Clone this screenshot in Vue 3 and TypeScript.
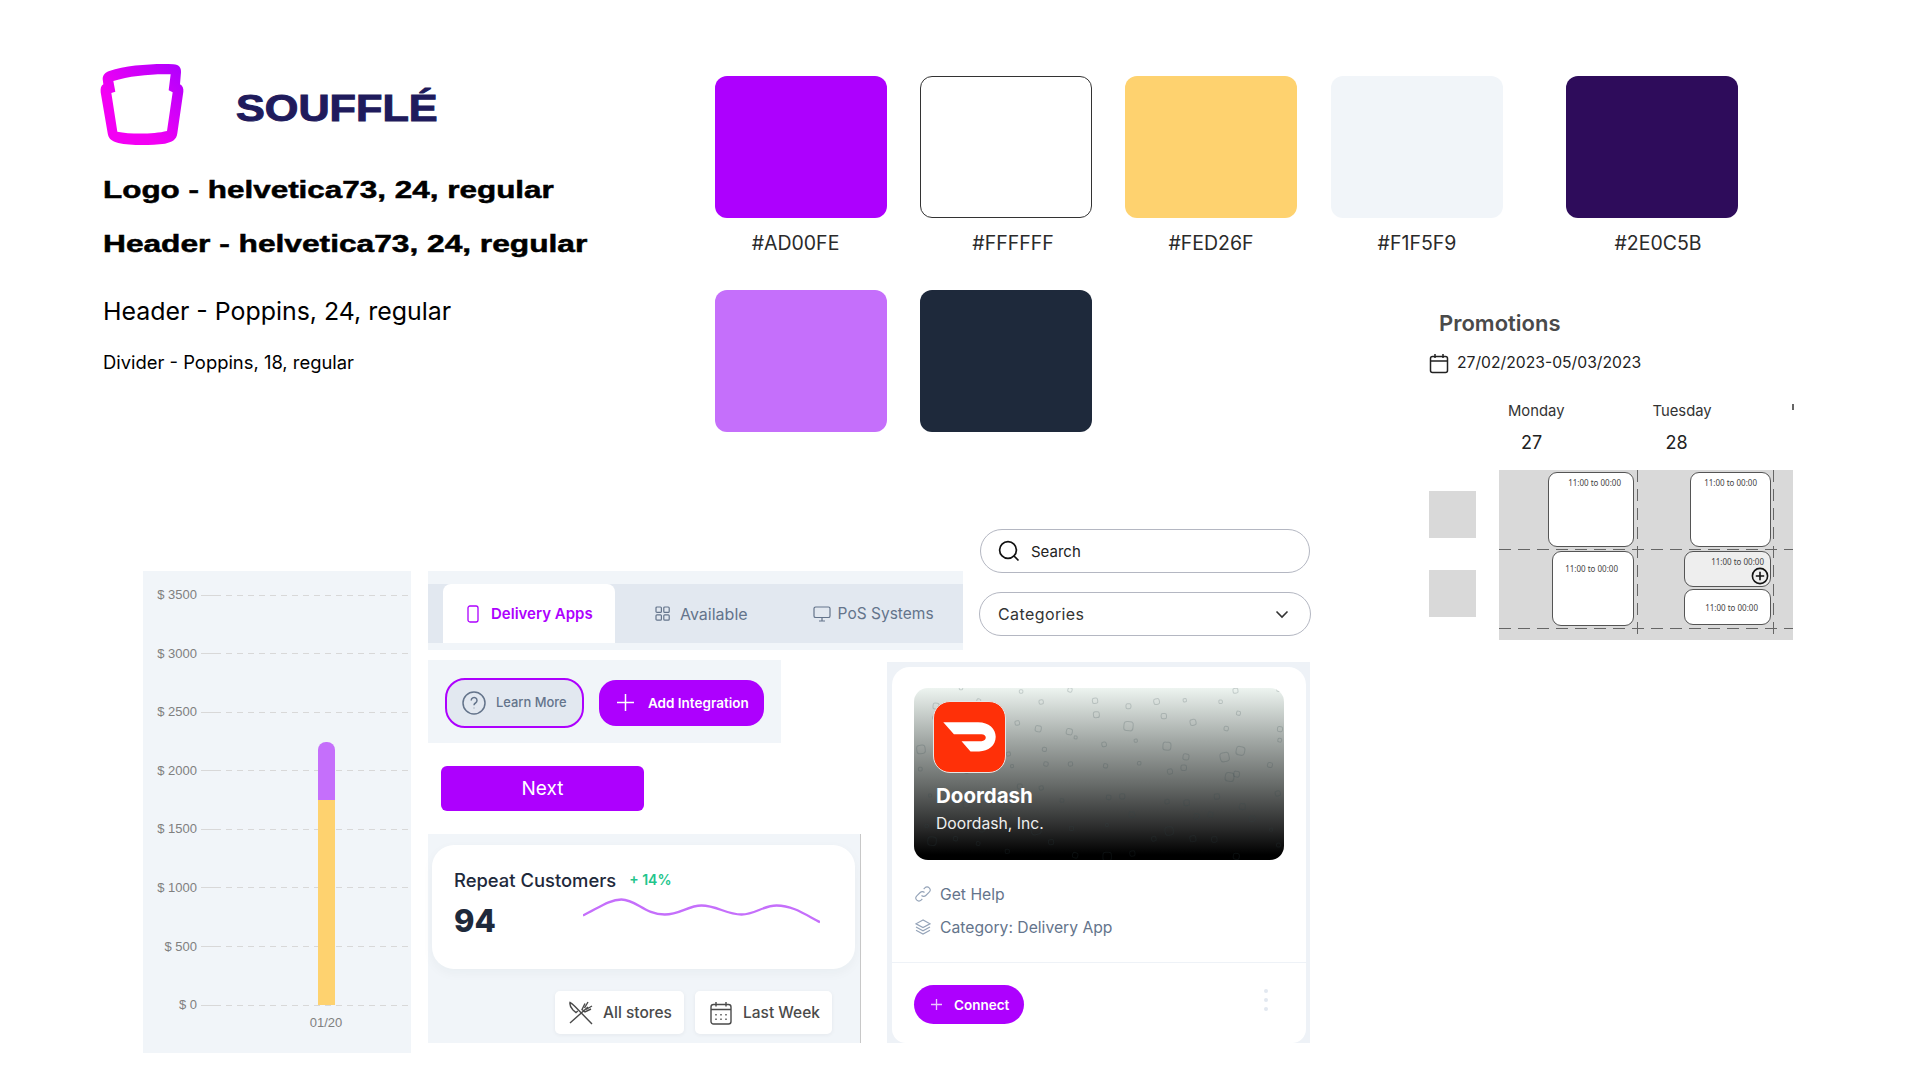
<template>
  <div class="board">
    <!-- brand + type specs -->
    <section class="brand">
      <svg class="logo" viewBox="0 0 300 290" width="100" height="96.7">
        <defs>
          <linearGradient id="logoGrad" x1="0" y1="1" x2="1" y2="0">
            <stop offset="0.35" stop-color="#f300f4" />
            <stop offset="1" stop-color="#ad00fe" />
          </linearGradient>
        </defs>
        <path
          fill="url(#logoGrad)"
          fill-rule="evenodd"
          d="M58 48C110 30 200 25 250 28C268 29 274 40 273 52L270 88C278 92 281 100 280 110L262 235C260 255 245 262 225 266C180 272 120 272 85 264C65 260 55 250 53 235L32 112C31 100 33 92 40 88L38 72C38 60 46 52 58 48ZM70 78C120 62 190 56 242 58L236 106L248 112L231 228C190 238 120 238 82 230L64 114L76 110Z"
        />
      </svg>
      <span class="wordmark">SOUFFLÉ</span>
    </section>

    <section class="specs">
      <div class="spec spec-a"><span class="wide">Logo - helvetica73, 24, regular</span></div>
      <div class="spec spec-b"><span class="wide">Header - helvetica73, 24, regular</span></div>
      <div class="spec spec-c">Header - Poppins, 24, regular</div>
      <div class="spec spec-d">Divider - Poppins, 18, regular</div>
    </section>

    <!-- palette -->
    <section class="palette">
      <div class="swatch-row">
        <div v-for="s in swatches" :key="s.hex" class="swatch-item" :class="s.cls">
          <div class="swatch" :style="{ background: s.hex }"></div>
          <div class="swatch-label">{{ s.hex }}</div>
        </div>
      </div>
      <div class="swatch-row second">
        <div class="swatch lilac"></div>
        <div class="swatch slate"></div>
      </div>
    </section>

    <!-- promotions -->
    <section class="promo">
      <h2 class="promo-title">Promotions</h2>
      <div class="promo-date">
        <svg width="20" height="21" viewBox="0 0 20 21" fill="none" stroke="#222" stroke-width="1.5">
          <rect x="1.5" y="3.5" width="17" height="16" rx="2" />
          <path d="M1.5 8h17M6 1v4M14 1v4" />
        </svg>
        <span>27/02/2023-05/03/2023</span>
      </div>
      <div class="days">
        <div class="day">
          <div class="day-name">Monday</div>
          <div class="day-num">27</div>
        </div>
        <div class="day">
          <div class="day-name">Tuesday</div>
          <div class="day-num">28</div>
        </div>
        <div class="day-clip"></div>
      </div>
      <div class="sched-wrap">
        <div class="row-heads">
          <div class="row-head"></div>
          <div class="row-head"></div>
        </div>
        <div class="sched">
          <svg class="sched-lines" width="294" height="170">
            <g stroke="#666" stroke-width="1" stroke-dasharray="12 7">
              <path d="M0 79.5H294M0 158.5H294" />
              <path d="M138.500 0V170M274.500 0V170" />
            </g>
          </svg>
          <div class="cell c1">
            <div class="slot s-a"><span>11:00 to 00:00</span></div>
          </div>
          <div class="cell c2">
            <div class="slot s-c"><span>11:00 to 00:00</span></div>
          </div>
          <div class="cell c3">
            <div class="slot s-b"><span>11:00 to 00:00</span></div>
          </div>
          <div class="cell c4">
            <div class="slot s-d">
              <span>11:00 to 00:00</span>
              <svg class="slot-add" width="18" height="18" viewBox="0 0 18 18" fill="none" stroke="#111" stroke-width="1.6">
                <circle cx="9" cy="9" r="7.600" />
                <path d="M9 4.800v8.400M4.800 9h8.400" />
              </svg>
            </div>
            <div class="slot s-e"><span>11:00 to 00:00</span></div>
          </div>
        </div>
      </div>
    </section>

    <!-- chart -->
    <section class="chart">
      <div v-for="t in ticks" :key="t" class="tick">
        <span class="tick-label">$ {{ t }}</span>
        <span class="tick-solid"></span>
        <span class="tick-dash"></span>
      </div>
      <div class="bar">
        <div class="bar-top"></div>
        <div class="bar-bottom"></div>
      </div>
      <div class="bar-label">01/20</div>
    </section>

    <!-- tabs -->
    <section class="tabs">
      <div class="tab-bar">
        <div class="tab active">
          <svg width="12" height="18" viewBox="0 0 12 18" fill="none" stroke="#ad00fe" stroke-width="1.300">
            <rect x="1" y="1" width="10" height="16" rx="2" />
            <path d="M6 14.200v.1" />
          </svg>
          Delivery Apps
        </div>
        <div class="tab avail">
          <svg width="15" height="15" viewBox="0 0 15 15" fill="none" stroke="#64748b" stroke-width="1.200">
            <rect x="1" y="1" width="5.400" height="5.400" rx="1" />
            <rect x="8.800" y="1" width="5.400" height="5.400" rx="1" />
            <rect x="1" y="8.800" width="5.400" height="5.400" rx="1" />
            <rect x="8.800" y="8.800" width="5.400" height="5.400" rx="1" />
          </svg>
          Available
        </div>
        <div class="tab pos">
          <svg width="18" height="16" viewBox="0 0 18 16" fill="none" stroke="#64748b" stroke-width="1.200">
            <rect x="1" y="1" width="16" height="10.500" rx="1.600" />
            <path d="M9 11.500v3.500M6 15h6" />
          </svg>
          PoS Systems
        </div>
      </div>
    </section>

    <section class="actions">
      <button class="learn">
        <svg width="24" height="24" viewBox="0 0 24 24" fill="none" stroke="#64748b" stroke-width="1.500">
          <circle cx="12" cy="12" r="11" />
          <path d="M9.200 9.400a2.900 2.900 0 1 1 4.300 2.600c-1 .6-1.500 1.100-1.500 2.200" />
          <path d="M12 16.800v.5" />
        </svg>
        Learn More
      </button>
      <button class="add">
        <svg width="17" height="17" viewBox="0 0 17 17" fill="none" stroke="#fff" stroke-width="1.500">
          <path d="M8.500 0v17M0 8.500h17" />
        </svg>
        Add Integration
      </button>
    </section>

    <button class="next">Next</button>

    <!-- repeat customers -->
    <section class="repeat">
      <div class="repeat-card">
        <div class="repeat-head">
          <span class="repeat-title">Repeat Customers</span>
          <span class="repeat-delta">+ 14%</span>
        </div>
        <div class="repeat-value">94</div>
        <svg class="spark" viewBox="490 235 710 80" width="237" height="27" fill="none">
          <path
            stroke="#c56ffb"
            stroke-width="7"
            d="M490 290C540 265 570 242 605 242C650 242 675 287 735 287C780 287 805 260 845 260C890 260 920 287 965 287C1005 287 1030 260 1070 260C1120 260 1160 290 1200 310"
          />
        </svg>
      </div>
      <div class="filters">
        <div class="filter stores">
          <svg width="24" height="24" viewBox="0 0 24 24" fill="none" stroke="#4a4a4a" stroke-width="1.400">
            <path d="M1 22L19 6M16 2.500l-3 6 3 2.500 6-3M19 1l-3.500 6M23 5l-6 3.500" />
            <path d="M23 23L6 5.500C4 3.500 2.200 2 1 1.500c-.4 2.500 1 5.500 3 7.500l3 2.500 1.800-1.500" />
          </svg>
          All stores
        </div>
        <div class="filter week">
          <svg width="22" height="24" viewBox="0 0 22 24" fill="none" stroke="#4a4a4a" stroke-width="1.400">
            <rect x="1" y="3.500" width="20" height="19.500" rx="2.500" />
            <path d="M1 8.500h20M6 1v4.500M16 1v4.500" />
            <path d="M6 13v1.400M11 13v1.400M16 13v1.400M6 17.500v1.400M11 17.500v1.400M16 17.500v1.400" />
          </svg>
          Last Week
        </div>
      </div>
    </section>

    <!-- search + select -->
    <div class="search">
      <svg width="22" height="22" viewBox="0 0 22 22" fill="none" stroke="#111" stroke-width="1.700">
        <circle cx="10" cy="10" r="8.400" />
        <path d="M16 16l4.500 4.500" />
      </svg>
      Search
    </div>
    <div class="select">
      Categories
      <svg width="14" height="9" viewBox="0 0 14 9" fill="none" stroke="#333" stroke-width="1.600">
        <path d="M1.500 1.500L7 7l5.500-5.500" />
      </svg>
    </div>

    <!-- integration card -->
    <section class="integration">
      <div class="int-card">
        <div class="int-hero">
          <svg class="int-pattern" width="370" height="172" fill="none" stroke="#33484a" stroke-opacity="0.2">
            <rect
              v-for="(p, i) in bubbles"
              :key="i"
              :x="p.x"
              :y="p.y"
              :width="p.s"
              :height="p.s"
              :rx="p.s / 3"
              :transform="`rotate(${p.r} ${p.x + p.s / 2} ${p.y + p.s / 2})`"
            />
          </svg>
          <div class="dd-icon">
            <svg viewBox="160 543 218 217" width="73" height="72">
              <path
                fill="#fff"
                d="M190 607L295 607C328 607 348 627 348 651C348 677 326 695 298 695L272 695L245 664L305 664C313 664 318 659 318 653C318 647 313 643 305 643L222 643Z"
              />
            </svg>
          </div>
          <div class="dd-name">Doordash</div>
          <div class="dd-company">Doordash, Inc.</div>
        </div>
        <div class="int-meta">
          <div class="meta-row">
            <svg width="16" height="16" viewBox="0 0 16 16" fill="none" stroke="#94a3b8" stroke-width="1.100">
              <path d="M6.500 9.500a3 3 0 0 0 4.300 0l3.400-3.400a3 3 0 0 0-4.300-4.300L8.700 3" />
              <path d="M9.500 6.500a3 3 0 0 0-4.300 0L1.800 9.900a3 3 0 0 0 4.300 4.300L7.300 13" />
            </svg>
            Get Help
          </div>
          <div class="meta-row">
            <svg width="16" height="16" viewBox="0 0 16 16" fill="none" stroke="#94a3b8" stroke-width="1.100">
              <path d="M8 1L1 4.800l7 3.800 7-3.800z" />
              <path d="M1 8l7 3.800L15 8" />
              <path d="M1 11.200L8 15l7-3.800" />
            </svg>
            Category: Delivery App
          </div>
        </div>
        <div class="int-foot">
          <button class="connect">
            <svg width="11" height="11" viewBox="0 0 11 11" fill="none" stroke="#ecc6ff" stroke-width="1.300">
              <path d="M5.500 0v11M0 5.500h11" />
            </svg>
            Connect
          </button>
          <div class="dots"><i></i><i></i><i></i></div>
        </div>
      </div>
    </section>
  </div>
</template>

<script setup lang="ts">
interface Swatch {
  hex: string;
  cls?: string;
}

const swatches: Swatch[] = [
  { hex: "#AD00FE", cls: "first" },
  { hex: "#FFFFFF", cls: "outlined" },
  { hex: "#FED26F" },
  { hex: "#F1F5F9", cls: "fourth" },
  { hex: "#2E0C5B", cls: "last" },
];

const ticks = [3500, 3000, 2500, 2000, 1500, 1000, 500, 0];

// little squircles on a jittered grid, behind the hero gradient
function makeBubbles() {
  const out: { x: number; y: number; s: number; r: number }[] = [];
  let seed = 37;
  const rnd = () => {
    seed = (seed * 16807) % 2147483647;
    return seed / 2147483647;
  };
  for (let row = 0; row < 7; row++) {
    for (let col = 0; col < 13; col++) {
      const big = rnd() > 0.8;
      out.push({
        x: col * 29 + rnd() * 22,
        y: row * 25 + rnd() * 20 - 4,
        s: big ? 8 + rnd() * 2 : 3 + rnd() * 3,
        r: rnd() * 30 - 15,
      });
    }
  }
  return out;
}

const bubbles = makeBubbles();
</script>

<style>
body {
  margin: 0;
  background: #fff;
}
</style>

<style scoped>
.board {
  position: relative;
  width: 1920px;
  height: 1080px;
  overflow: hidden;
  background: #fff;
  font-family: Inter, "Noto Sans", sans-serif;
  color: #111;
}

.board > section,
.board > .search,
.board > .select,
.board > .next {
  position: absolute;
}

button {
  border: 0;
  font-family: inherit;
  padding: 0;
}

/* brand */
.brand {
  left: 90px;
  top: 55px;
  width: 360px;
  height: 100px;
}
.logo {
  display: block;
}
.wordmark {
  position: absolute;
  left: 146px;
  top: 31px;
  font: 700 36px/46px "Liberation Sans", Arial, sans-serif;
  color: #1f1b5c;
  -webkit-text-stroke: 1px #1f1b5c;
  transform: scaleX(1.2);
  transform-origin: left center;
}

/* type specs */
.specs {
  left: 103px;
  top: 170px;
  width: 520px;
}
.spec {
  white-space: nowrap;
}
.wide {
  display: inline-block;
  font: 700 24px/40px "Liberation Sans", Arial, sans-serif;
  -webkit-text-stroke: 0.5px #000;
  transform: scaleX(1.31);
  transform-origin: left center;
  color: #000;
}
.spec-b {
  margin-top: 14px;
}
.spec-b .wide {
  transform: scaleX(1.32);
}
.spec-c {
  margin-top: 27px;
  font-size: 24.900px;
  line-height: 40px;
  font-weight: 400;
  color: #000;
}
.spec-d {
  margin-top: 16px;
  font-size: 18.400px;
  line-height: 30px;
  font-weight: 400;
  color: #000;
}

/* palette */
.palette {
  left: 715px;
  top: 76px;
}
.swatch-row {
  display: flex;
  gap: 33px;
}
.swatch-row.second {
  margin-top: 35px;
}
.swatch-item {
  width: 172px;
  display: flex;
  flex-direction: column;
  align-items: center;
}
.swatch-item.fourth {
  margin-left: 1px;
}
.swatch-item.last {
  margin-left: 30px;
}
.swatch {
  width: 172px;
  height: 142px;
  border-radius: 12px;
  box-sizing: border-box;
}
.swatch.lilac {
  background: #c56ffb;
}
.swatch.slate {
  background: #1e293b;
}
.outlined .swatch {
  border: 1px solid #333;
}
.swatch-label {
  margin-top: 13px;
  font-size: 19.500px;
  line-height: 24px;
  color: #2a2a2a;
}
.swatch-item.first .swatch-label {
  margin-right: 11px;
}
.swatch-item.outlined .swatch-label {
  margin-left: 14px;
}
.swatch-item.last .swatch-label {
  margin-left: 12px;
}

/* promotions */
.promo {
  left: 1427px;
  top: 308px;
  width: 370px;
}
.promo-title {
  margin: 0 0 0 12px;
  font-size: 22px;
  line-height: 30px;
  font-weight: 600;
  color: #4a4a4a;
}
.promo-date {
  display: flex;
  align-items: center;
  gap: 8px;
  margin-top: 14px;
  margin-left: 2px;
  font-size: 15.700px;
  line-height: 22px;
  color: #222;
}
.days {
  position: relative;
  display: flex;
  margin-top: 26px;
  margin-left: 81px;
  height: 54px;
}
.day {
  width: 148px;
}
.day-name {
  font-size: 14.800px;
  line-height: 22px;
  color: #333;
}
.day-num {
  margin: 9px 0 0 13px;
  font-size: 18px;
  line-height: 24px;
  color: #222;
}
/* sliver of the next column's heading */
.day-clip {
  position: absolute;
  left: 284px;
  top: 4px;
  width: 2px;
  height: 6px;
  background: #666;
}
.sched-wrap {
  display: flex;
  margin-top: 16px;
  margin-left: 2px;
}
.row-heads {
  width: 70px;
  padding-top: 21px;
}
.row-head {
  width: 47px;
  height: 47px;
  background: #d9d9d9;
  margin-bottom: 32px;
}
.sched {
  position: relative;
  width: 294px;
  height: 170px;
  background: #d9d9d9;
  display: grid;
  grid-template-columns: 138px 136px 20px;
  grid-template-rows: 79px 79px 12px;
}
.sched-lines {
  position: absolute;
  left: 0;
  top: 0;
}
.cell {
  position: relative;
  display: flex;
  flex-direction: column;
  align-items: flex-end;
  padding: 2px 3px 2px 0;
  gap: 2px;
}
.c1 {
  grid-area: 1 / 1;
}
.c2 {
  grid-area: 1 / 2;
  padding-right: 2px;
}
.c3 {
  grid-area: 2 / 1;
}
.c4 {
  grid-area: 2 / 2;
  padding-right: 2px;
}
.slot {
  position: relative;
  box-sizing: border-box;
  background: #fff;
  border: 1px solid #555;
  border-radius: 9px;
  font-family: "Noto Sans", Inter, sans-serif;
  font-size: 8px;
  line-height: 10px;
  color: #444;
}
.slot span {
  position: absolute;
  white-space: nowrap;
}
.s-a {
  width: 86px;
  height: 75px;
}
.s-a span {
  right: 12px;
  top: 5px;
}
.s-b {
  width: 82px;
  height: 75px;
}
.s-b span {
  right: 15px;
  top: 12px;
}
.s-c {
  width: 81px;
  height: 75px;
}
.s-c span {
  right: 13px;
  top: 5px;
}
.s-d {
  width: 87px;
  height: 36px;
  background: #eee;
}
.s-d span {
  right: 6px;
  top: 5px;
}
.s-e {
  width: 87px;
  height: 36px;
}
.s-e span {
  right: 12px;
  top: 13px;
}
.slot-add {
  position: absolute;
  right: 1px;
  bottom: 1px;
}

/* chart */
.chart {
  left: 143px;
  top: 571px;
  width: 268px;
  height: 482px;
  background: #f1f5f9;
  padding-top: 15px;
  box-sizing: border-box;
}
.tick {
  display: flex;
  align-items: center;
  height: 18px;
  margin-bottom: 40.600px;
}
.tick-label {
  width: 54px;
  text-align: right;
  font: 13px/18px "Liberation Sans", Arial, sans-serif;
  color: #808080;
}
.tick-solid {
  width: 14px;
  height: 1px;
  margin-left: 4px;
  background: #d8d8d8;
}
.tick-dash {
  width: 193px;
  height: 1px;
  background: repeating-linear-gradient(90deg, #d8d8d8 0 6px, transparent 6px 11px);
}
.bar {
  position: absolute;
  left: 175px;
  top: 171px;
  width: 17px;
  display: flex;
  flex-direction: column;
}
.bar-top {
  height: 58px;
  background: #c56ffb;
  border-radius: 8px 8px 0 0;
}
.bar-bottom {
  height: 205px;
  background: #fed26f;
}
.bar-label {
  position: absolute;
  left: 163px;
  top: 443px;
  width: 40px;
  text-align: center;
  font: 13px/18px "Liberation Sans", Arial, sans-serif;
  color: #808080;
}

/* tabs */
.tabs {
  left: 428px;
  top: 571px;
  width: 535px;
  height: 79px;
  background: #f1f5f9;
  padding-top: 13px;
  box-sizing: border-box;
}
.tab-bar {
  display: flex;
  align-items: stretch;
  height: 59px;
  padding-left: 15px;
  background: #e2e8f0;
}
.tab {
  display: flex;
  align-items: center;
  font-size: 15.500px;
  color: #64748b;
}
.tab.avail {
  margin-left: 40px;
  gap: 10px;
  font-size: 16px;
}
.tab.pos {
  margin-left: 65px;
  gap: 7px;
}
.tab.active {
  width: 172px;
  padding-left: 24px;
  box-sizing: border-box;
  background: #fff;
  border-radius: 8px 8px 0 0;
  color: #ad00fe;
  font-size: 15px;
  font-weight: 600;
  gap: 12px;
}

/* action buttons */
.actions {
  left: 428px;
  top: 660px;
  width: 353px;
  height: 83px;
  background: #f1f5f9;
  display: flex;
  align-items: center;
  gap: 15px;
  padding: 2px 0 0 17px;
  box-sizing: border-box;
}
.learn {
  display: flex;
  align-items: center;
  gap: 10px;
  width: 139px;
  height: 50px;
  padding-left: 15px;
  box-sizing: border-box;
  border: 2px solid #ad00fe;
  border-radius: 20px;
  background: #e2e8f0;
  font-size: 12.900px;
  font-weight: 500;
  color: #64748b;
}
.add {
  display: flex;
  align-items: center;
  gap: 14px;
  width: 165px;
  height: 46px;
  padding-left: 18px;
  box-sizing: border-box;
  border-radius: 17px;
  background: #ad00fe;
  font-size: 13.500px;
  font-weight: 600;
  color: #fff;
  white-space: nowrap;
}
.next {
  left: 441px;
  top: 766px;
  width: 203px;
  height: 45px;
  border-radius: 6px;
  background: #ad00fe;
  color: #fff;
  font-size: 19px;
}

/* repeat customers */
.repeat {
  left: 428px;
  top: 834px;
  width: 433px;
  height: 209px;
  background: #f1f5f9;
  border-right: 1px solid #c8c8c8;
  box-sizing: border-box;
  padding: 11px 0 0 4px;
}
.repeat-card {
  position: relative;
  width: 423px;
  height: 124px;
  background: #fff;
  border-radius: 22px;
  box-shadow: 0 4px 12px rgba(30, 41, 59, 0.04);
  padding: 24px 0 0 22px;
  box-sizing: border-box;
}
.repeat-head {
  display: flex;
  align-items: center;
  gap: 13px;
  line-height: 22px;
}
.repeat-title {
  font-size: 18.400px;
  font-weight: 500;
  color: #1e293b;
}
.repeat-delta {
  font-size: 14px;
  font-weight: 600;
  color: #22c58b;
}
.repeat-value {
  margin-top: 10px;
  font-size: 31px;
  line-height: 40px;
  font-weight: 800;
  color: #1e293b;
}
.spark {
  position: absolute;
  left: 151px;
  top: 52px;
}
.filters {
  display: flex;
  justify-content: flex-end;
  gap: 11px;
  margin-top: 22px;
  padding-right: 28px;
}
.filter {
  display: flex;
  align-items: center;
  height: 43px;
  background: #fff;
  border-radius: 5px;
  box-shadow: 0 1px 4px rgba(30, 41, 59, 0.06);
  font-size: 15.500px;
  font-weight: 500;
  color: #4a4a4a;
  box-sizing: border-box;
}
.stores {
  width: 129px;
  padding-left: 14px;
  gap: 10px;
}
.week {
  width: 137px;
  padding-left: 15px;
  gap: 11px;
}

/* search + select */
.search,
.select {
  display: flex;
  align-items: center;
  box-sizing: border-box;
  background: #fff;
  border: 1px solid #b4b7c2;
  border-radius: 24px;
}
.search {
  left: 980px;
  top: 529px;
  width: 330px;
  height: 44px;
  padding-left: 17px;
  gap: 11px;
  font-size: 15px;
  color: #222;
}
.select {
  left: 979px;
  top: 592px;
  width: 332px;
  height: 44px;
  padding: 0 21px 0 18px;
  justify-content: space-between;
  font-size: 16px;
  letter-spacing: 0.4px;
  color: #333;
}

/* integration */
.integration {
  left: 887px;
  top: 662px;
  width: 423px;
  height: 381px;
  background: #eef2f7;
  padding: 5px 4px 0 5px;
  box-sizing: border-box;
}
.int-card {
  height: 376px;
  background: #fff;
  border-radius: 18px 18px 14px 14px;
  padding-top: 21px;
  box-sizing: border-box;
}
.int-hero {
  position: relative;
  height: 172px;
  margin: 0 22px;
  padding: 13px 0 0 19px;
  box-sizing: border-box;
  border-radius: 14px;
  overflow: hidden;
  background: linear-gradient(180deg, #edf4f0 0%, #a3a9a6 30%, #6a6e6c 55%, #2e2f2f 80%, #000 97%);
}
.int-pattern {
  position: absolute;
  left: 0;
  top: 0;
}
.dd-icon {
  position: relative;
  width: 73px;
  height: 72px;
  box-sizing: border-box;
  border: 1.500px solid #e6e6e6;
  border-radius: 17px;
  background: #ff3008;
  overflow: hidden;
}
.dd-icon svg {
  display: block;
  margin: -1.500px;
}
.dd-name {
  position: relative;
  margin: 11px 0 0 3px;
  font-size: 20.500px;
  line-height: 24px;
  font-weight: 700;
  color: #fff;
}
.dd-company {
  position: relative;
  margin: 6px 0 0 3px;
  font-size: 15.700px;
  line-height: 20px;
  color: #eee;
}
.int-meta {
  padding: 24px 0 0 23px;
}
.meta-row {
  display: flex;
  align-items: center;
  gap: 9px;
  height: 20px;
  margin-bottom: 13px;
  font-size: 15.700px;
  color: #64748b;
}
.int-foot {
  display: flex;
  align-items: flex-start;
  justify-content: space-between;
  margin-top: 25px;
  padding: 22px 38px 0 22px;
  border-top: 1px solid #eef2f7;
}
.connect {
  display: flex;
  align-items: center;
  gap: 12px;
  width: 110px;
  height: 39px;
  padding-left: 17px;
  box-sizing: border-box;
  border-radius: 20px;
  background: #ad00fe;
  font-size: 13.500px;
  font-weight: 600;
  color: #fff;
}
.dots {
  display: flex;
  flex-direction: column;
  gap: 5px;
  margin-top: 4px;
}
.dots i {
  width: 4px;
  height: 4px;
  border-radius: 50%;
  background: #e2e8f0;
}
</style>
